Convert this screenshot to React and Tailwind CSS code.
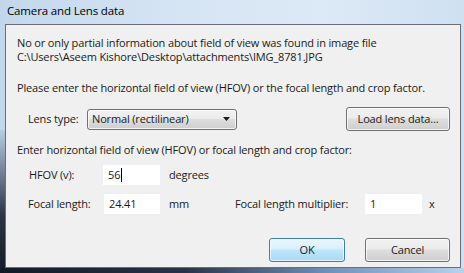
import React from "react";

const font = { fontFamily: '"Open Sans", "Noto Sans", sans-serif' };

function Btn({ children, className = "", primary = false }) {
  return (
    <div
      className={
        "flex items-center justify-center rounded-[3px] border text-[#1a1a1a] " +
        (primary
          ? "border-[#3c7fb1] bg-[linear-gradient(#eaf6fd_0%,#d9f0fc_45%,#bee6fd_50%,#a7d9f5_100%)] shadow-[inset_0_0_0_1px_#ffffffb0] "
          : "border-[#707070] bg-[linear-gradient(#f2f2f2_0%,#ebebeb_45%,#dddddd_50%,#cfcfcf_100%)] shadow-[inset_0_0_0_1px_#ffffffc0] ") +
        className
      }
    >
      {children}
    </div>
  );
}

function Input({ value, className = "", caret = false }) {
  return (
    <div className={"flex h-[22px] items-center bg-white pl-[5px] text-[#1a1a1a] border border-[#eef0f3] " + className}>
      {value}
      {caret && <span className="ml-[1px] inline-block h-[14px] w-[1px] bg-black" />}
    </div>
  );
}

export default function App() {
  return (
    <div
      className="relative h-[273px] w-[464px] overflow-hidden whitespace-nowrap bg-[linear-gradient(90deg,#c3d7ec_0%,#d6e5f4_40%,#dce9f6_70%,#cfe0f1_100%)] text-[11px] tracking-[-0.15px] text-[#1a1a1a]"
      style={font}
    >
      <div className="flex h-[24px] items-center pb-[3px] pl-[7px] text-[11.5px] text-black">Camera and Lens data</div>
      <div className="absolute left-0 top-[130px] h-[143px] w-[5px] bg-[linear-gradient(#b9cde3,#2a3346_60%,#151b26)]" />
      <div className="absolute bottom-0 left-0 h-[5px] w-[464px] bg-[linear-gradient(90deg,#141a24_0%,#2a3346_40%,#6f8fb5_70%,#b9d2ec_100%)]" />
      <div className="ml-[5px] flex h-[244px] w-[456px] flex-col border border-[#6b6f75] bg-[#f0f0f0] pl-[11px] pt-[11px] leading-[14px]">
        <div>No or only partial information about field of view was found in image file</div>
        <div>C:\Users\Aseem Kishore\Desktop\attachments\IMG_8781.JPG</div>
        <div className="mt-[17px]">Please enter the horizontal field of view (HFOV) or the focal length and crop factor.</div>
        <div className="mt-[12px] flex h-[24px] items-center">
          <div className="ml-[11px] w-[59px]">Lens type:</div>
          <div className="flex h-[21px] w-[150px] items-center justify-between rounded-[3px] border border-[#707070] bg-[linear-gradient(#f2f2f2_0%,#ebebeb_45%,#dddddd_50%,#cfcfcf_100%)] pl-[4px] pr-[6px] shadow-[inset_0_0_0_1px_#ffffffc0]">
            <span>Normal (rectilinear)</span>
            <svg width="7" height="4" viewBox="0 0 7 4"><path d="M0 0h7L3.5 4z" fill="#1a1a1a" /></svg>
          </div>
          <Btn className="ml-[109px] h-[24px] w-[104px]">Load lens data...</Btn>
        </div>
        <div className="mt-[12px]">Enter horizontal field of view (HFOV) or focal length and crop factor:</div>
        <div className="mt-[7px] flex items-center">
          <div className="ml-[12px] w-[73px]">HFOV (v):</div>
          <Input value="56" caret className="w-[59px]" />
          <div className="ml-[8px]">degrees</div>
        </div>
        <div className="mt-[7px] flex items-center">
          <div className="ml-[11px] w-[75px]">Focal length:</div>
          <Input value="24.41" className="w-[58px]" />
          <div className="ml-[8px] w-[66px]">mm</div>
          <div className="w-[129px]">Focal length multiplier:</div>
          <Input value="1" className="w-[59px]" />
          <div className="ml-[6px]">x</div>
        </div>
        <div className="mt-[23px] flex">
          <Btn primary className="ml-[252px] h-[24px] w-[76px]">OK</Btn>
          <Btn className="ml-[20px] h-[24px] w-[85px]">Cancel</Btn>
        </div>
      </div>
    </div>
  );
}
